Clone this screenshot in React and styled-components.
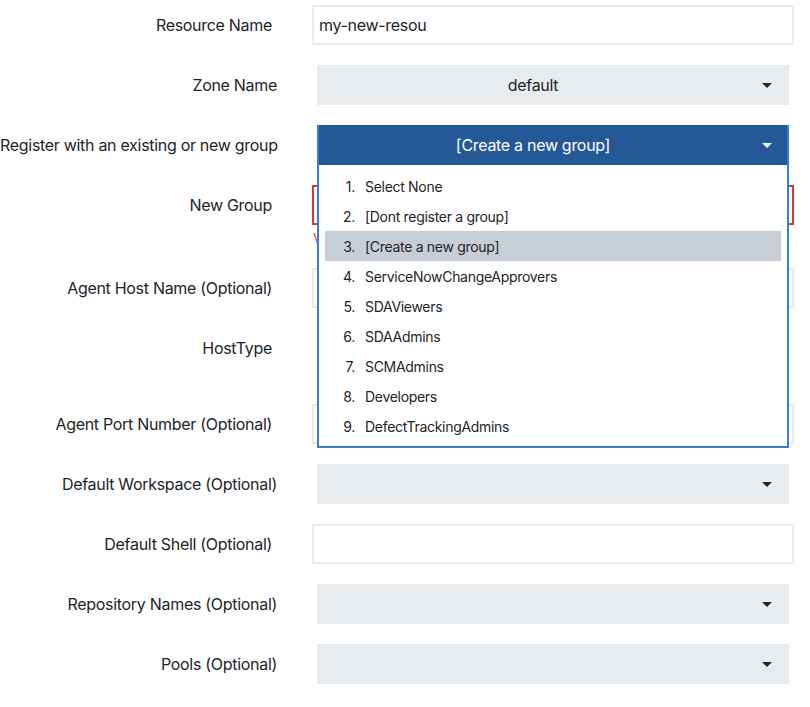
import React from "react";
import styled, { createGlobalStyle } from "styled-components";

const GlobalStyle = createGlobalStyle`
  body {
    margin: 0;
    background: #fff;
    font-family: Inter, "Noto Sans", sans-serif;
    letter-spacing: -0.3px;
    color: #212529;
  }
  * { box-sizing: border-box; }
`;

const Form = styled.div`
  display: flex;
  flex-direction: column;
  gap: 20px;
  width: 794px;
  padding-top: 5px;
`;

const Row = styled.div`
  display: grid;
  grid-template-columns: 277px 1fr;
  column-gap: 35px;
  align-items: start;
  position: relative;
  z-index: ${(p) => (p.$top ? 5 : "auto")};
`;

const Label = styled.label`
  font-size: 16px;
  line-height: 40px;
  text-align: right;
  white-space: nowrap;
  padding-right: ${(p) => (p.$select ? 0 : 5)}px;
`;

const Control = styled.div`
  display: flex;
  flex-direction: column;
  min-height: ${(p) => p.$h || 40}px;
`;

const TextInput = styled.input`
  height: 40px;
  width: 100%;
  border: 2px solid ${(p) => (p.$error ? "#d7392e" : "#e9ecef")};
  padding: 0 5px;
  font-family: inherit;
  letter-spacing: inherit;
  font-size: 16px;
  color: #212529;
  outline: none;
  background: #fff;
`;

const ErrorText = styled.div`
  color: #d7392e;
  font-size: 13px;
  line-height: 20px;
  margin-top: 3px;
  padding-left: 1px;
`;

const SelectWrap = styled.div`
  position: relative;
  margin: 0 5px;
`;

const SelectBox = styled.div`
  position: relative;
  height: 40px;
  display: flex;
  align-items: center;
  justify-content: center;
  padding-right: 40px;
  font-size: 16px;
  background: ${(p) => (p.$open ? "#255896" : "#e9ecef")};
  color: ${(p) => (p.$open ? "#fff" : "#212529")};
  box-shadow: ${(p) =>
    p.$open ? "inset 2px 0 0 #3a7bd3, inset -2px 0 0 #3a7bd3" : "none"};
`;

const Caret = styled.span`
  position: absolute;
  right: 17px;
  top: 18px;
  width: 0;
  height: 0;
  border-left: 5px solid transparent;
  border-right: 5px solid transparent;
  border-top: 5px solid ${(p) => (p.$light ? "#fff" : "#212529")};
`;

const Menu = styled.ul`
  position: absolute;
  top: 40px;
  left: 0;
  right: 0;
  z-index: 10;
  margin: 0;
  list-style: none;
  background: #fff;
  border: 2px solid #3a7bd3;
  border-top: none;
  padding: 6px 6px 5px;
`;

const Option = styled.li`
  height: 30px;
  display: flex;
  align-items: center;
  font-size: 14px;
  color: #212529;
  background: ${(p) => (p.$active ? "#c8ced5" : "transparent")};
`;

const Num = styled.span`
  width: 30px;
  text-align: right;
  margin-right: 10px;
`;

const groups = [
  "Select None",
  "[Dont register a group]",
  "[Create a new group]",
  "ServiceNowChangeApprovers",
  "SDAViewers",
  "SDAAdmins",
  "SCMAdmins",
  "Developers",
  "DefectTrackingAdmins",
];

function Select({ value, open, options, active }) {
  return (
    <SelectWrap>
      <SelectBox $open={open}>
        {value}
        <Caret $light={open} />
      </SelectBox>
      {open && (
        <Menu>
          {options.map((o, i) => (
            <Option key={o} $active={i === active}>
              <Num>{i + 1}.</Num>
              {o}
            </Option>
          ))}
        </Menu>
      )}
    </SelectWrap>
  );
}

export default function App() {
  return (
    <>
      <GlobalStyle />
      <Form>
        <Row>
          <Label>Resource Name</Label>
          <Control>
            <TextInput defaultValue="my-new-resou" />
          </Control>
        </Row>
        <Row>
          <Label $select>Zone Name</Label>
          <Control>
            <Select value="default" />
          </Control>
        </Row>
        <Row $top>
          <Label $select>Register with an existing or new group</Label>
          <Control>
            <Select value="[Create a new group]" open options={groups} active={2} />
          </Control>
        </Row>
        <Row>
          <Label>New Group</Label>
          <Control>
            <TextInput $error />
            <ErrorText>Value is required</ErrorText>
          </Control>
        </Row>
        <Row>
          <Label>Agent Host Name (Optional)</Label>
          <Control>
            <TextInput />
          </Control>
        </Row>
        <Row>
          <Label>HostType</Label>
          <Control $h={56} />
        </Row>
        <Row>
          <Label>Agent Port Number (Optional)</Label>
          <Control>
            <TextInput />
          </Control>
        </Row>
        <Row>
          <Label $select>Default Workspace (Optional)</Label>
          <Control>
            <Select value="" />
          </Control>
        </Row>
        <Row>
          <Label>Default Shell (Optional)</Label>
          <Control>
            <TextInput />
          </Control>
        </Row>
        <Row>
          <Label $select>Repository Names (Optional)</Label>
          <Control>
            <Select value="" />
          </Control>
        </Row>
        <Row>
          <Label $select>Pools (Optional)</Label>
          <Control>
            <Select value="" />
          </Control>
        </Row>
      </Form>
    </>
  );
}
